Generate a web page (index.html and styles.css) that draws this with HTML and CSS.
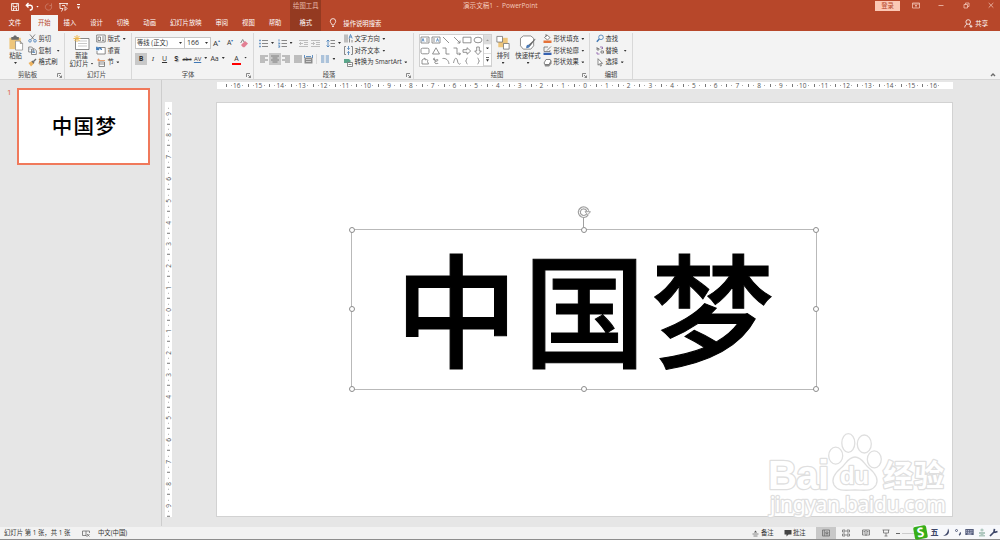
FILE: index.html
```html
<!DOCTYPE html>
<html>

<head>
    <meta charset="utf-8">
    <link rel="stylesheet" href="styles.css">
    <title>演示文稿1 - PowerPoint</title>
</head>

<body>
    <div class="header">
        <div class="titlebar">
            <div class="quick">
                <svg width="10" height="10" viewBox="0 0 10 10"><path d="M1.5 1.5h7v7h-7zM3 1.5v3h4v-3M3.5 8.500v-2.500h3v2.500" /></svg>
                <svg width="10" height="10" viewBox="0 0 10 10"><path class="bold" d="M3.500 1L1.300 3.300l2.200 2.200M1.500 3.300h4a2.400 2.400 0 0 1 0 4.700h-.7" /></svg>
                <i class="caret"></i>
                <svg class="faded" width="9" height="10" viewBox="0 0 10 10"><path d="M8 3.200A3.500 3.500 0 1 1 5 1.500M8.300 1v2.500H6" /></svg>
                <svg width="11" height="10" viewBox="0 0 11 10"><path d="M1 1.500h9M2 1.500v5h3M9 1.500v2M4 3.500h3M5 6.500l-1.500 3M7 4.500v4l2-2z" /></svg>
                <i class="caret barred"></i>
            </div>
            <div class="doc-name">演示文稿1&nbsp; -&nbsp; PowerPoint</div>
            <div class="login">登录</div>
            <div class="window">
                <svg width="8" height="7" viewBox="0 0 8 7"><path d="M.5 1h7v5h-7zM.5 2h7M4 5.500v-2M3 4l1-1 1 1" /></svg>
                <svg width="6" height="7" viewBox="0 0 6 7"><path d="M.5 3.500h5" /></svg>
                <svg width="7" height="7" viewBox="0 0 7 7"><path d="M1 2.500h3.500v3.500H1zM2.500 2.500V1H6v3.500H4.500" /></svg>
                <svg width="6" height="7" viewBox="0 0 6 7"><path d="M.7 1l4.600 4.600M5.300 1L.7 5.600" /></svg>
            </div>
        </div>
        <div class="tabs">
            <div class="tab file">文件</div>
            <div class="tab active">开始</div>
            <div class="tab">插入</div>
            <div class="tab">设计</div>
            <div class="tab">切换</div>
            <div class="tab">动画</div>
            <div class="tab">幻灯片放映</div>
            <div class="tab">审阅</div>
            <div class="tab">视图</div>
            <div class="tab">帮助</div>
            <div class="tab context"><span>绘图工具</span>格式</div>
            <div class="tell">
                <svg width="8" height="10" viewBox="0 0 8 10"><path d="M3 7C3 5.500 1.300 5 1.300 3.300a2.700 2.700 0 0 1 5.400 0C6.700 5 5 5.500 5 7zM3 8.500h2" /></svg>
                操作说明搜索
            </div>
            <div class="share">
                <svg width="9" height="9" viewBox="0 0 9 9"><circle cx="4.200" cy="3" r="2.300" /><path d="M.8 8.500c0-2 1.200-3 2.500-3.200M5 5.300l1.500 1M5.500 7.300h3M7 5.800v3" /></svg>
                共享
            </div>
        </div>
    </div>

    <div class="ribbon">
        <div class="group clipboard">
            <div class="body">
                <div class="big">
                    <svg width="16" height="17" viewBox="0 0 16 17"><path fill="#eec67c" d="M1 3h12v12H1z" /><path fill="#6a6a6a" d="M3 2h2l1-1.500h2L9 2h2v3H3z" /><path fill="#fff" stroke="#7c7c7c" stroke-width=".7" d="M7.500 6.500h5l2.500 2.500v7H7.500zM12.500 6.500V9H15" /></svg>
                    <span>粘贴</span>
                    <i class="caret"></i>
                </div>
                <div class="rows">
                    <div class="row"><svg width="9" height="9" viewBox="0 0 9 9"><path class="k" d="M2 .5l4 5M7 .5l-4 5" /><circle class="b" cx="2" cy="6.800" r="1.300" /><circle class="b" cx="7" cy="6.800" r="1.300" /></svg>剪切</div>
                    <div class="row"><svg width="9" height="9" viewBox="0 0 9 9"><path class="k w" d="M.7 1h3l1.500 1.500V6H.7zM3.500 3h3L8.300 4.500v4H3.500z" /><path class="b" d="M4.500 5h2.500M4.500 6.500h2.500M1.500 3h1" /></svg>复制<i class="caret far"></i></div>
                    <div class="row"><svg width="9" height="9" viewBox="0 0 9 9"><path fill="#eeb35f" d="M.5 5L4 3l2 2.500-3 3z" /><path class="k bold" d="M4 3l2 2.300M5.500 3.500L8 1" /></svg>格式刷</div>
                </div>
            </div>
            <div class="name">剪贴板</div>
            <svg class="launch" viewBox="0 0 5 5"><path class="k" d="M.5 4V.5H4M2 2l2.500 2.500M4.500 2.500v2h-2" /></svg>
        </div>

        <div class="group slides">
            <div class="body">
                <div class="big">
                    <svg width="17" height="16" viewBox="0 0 17 16"><path class="w k" d="M2.500 3.500H16v11H2.500z" /><path stroke="#bbb" d="M5 6h9M5 8.500h9M5 11h9" /><path stroke="#efb94f" stroke-width="1" d="M4 0v7M.5 3.500h7M1.500 1l5 5M6.500 1l-5 5" /></svg>
                    <span>新建</span>
                    <span>幻灯片<i class="caret"></i></span>
                </div>
                <div class="rows">
                    <div class="row"><svg width="10" height="9" viewBox="0 0 10 9"><path class="k w" d="M.7 1h8.500v7H.7z" /><path class="k" d="M2 3h2.500v3.500H2zM6 3h2M6 5h2M6 6.500h2" /></svg>版式<i class="caret"></i></div>
                    <div class="row"><svg width="10" height="9" viewBox="0 0 10 9"><path class="k w" d="M3 1.500h6.200v6.500H1V5" /><path class="b bold" d="M1 3.300C2 1.200 5 1 5.500 4M.8.8v2.700h2.500" /></svg>重置</div>
                    <div class="row"><svg width="10" height="9" viewBox="0 0 10 9"><path class="k w" d="M3 4h5.500v4.500H3zM3 6h5.500" /><path stroke="#e88b4e" d="M3 2.500h6M2.500.5v3M1 2h3" /></svg>节<i class="caret"></i></div>
                </div>
            </div>
            <div class="name">幻灯片</div>
        </div>

        <div class="group font">
            <div class="lines">
                <div class="line">
                    <div class="box family">等线 (正文)<i class="caret"></i></div>
                    <div class="box size">166<i class="caret"></i></div>
                    <span class="grow">A<sup>▴</sup></span>
                    <span class="grow small">A<sup>▾</sup></span>
                    <svg width="9" height="9" viewBox="0 0 9 9"><path fill="#e37f93" d="M1 6l4-4 3 2.500-3.500 3.700H3z" /><path class="k" d="M.7 4l2-3.500L4 3" /></svg>
                </div>
                <div class="line style">
                    <b class="on">B</b>
                    <em>I</em>
                    <u>U</u>
                    <b class="shadow">S</b>
                    <s>abc</s>
                    <span class="spacing">AV<i class="caret"></i></span>
                    <span>Aa<i class="caret"></i></span>
                    <span><span class="color">A</span><i class="caret"></i></span>
                </div>
            </div>
            <div class="name">字体</div>
            <svg class="launch" viewBox="0 0 5 5"><path class="k" d="M.5 4V.5H4M2 2l2.500 2.500M4.500 2.500v2h-2" /></svg>
        </div>

        <div class="group paragraph">
            <div class="body">
                <div class="lines">
                    <div class="line">
                        <svg width="9" height="9" viewBox="0 0 9 9"><path class="k" d="M3 1.500h6M3 4.500h6M3 7.500h6" /><path class="b bold" d="M.3 1.500h1.400M.3 4.500h1.400M.3 7.500h1.400" /></svg><i class="caret"></i>
                        <svg width="9" height="9" viewBox="0 0 9 9"><path class="k" d="M3.500 1.500H9M3.500 4.500H9M3.500 7.500H9" /><path class="b" d="M1 .3v2.200M.3 4h1.400v1H.3M.3 6.800h1.400v1.400H.3" /></svg><i class="caret"></i>
                        <i class="bar"></i>
                        <svg class="dim" width="9" height="9" viewBox="0 0 9 9"><path class="k" d="M0 1.500h9M5 3.500h4M5 5.500h4M0 7.500h9M4 4.500H.5M2 3L.5 4.500 2 6" /></svg>
                        <svg class="dim" width="9" height="9" viewBox="0 0 9 9"><path class="k" d="M0 1.500h9M5 3.500h4M5 5.500h4M0 7.500h9M0 4.500h3.500M2 3l1.500 1.500L2 6" /></svg>
                        <i class="bar"></i>
                        <svg width="9" height="9" viewBox="0 0 9 9"><path class="k" d="M4.500 1.500H9M4.500 4.500H9M4.500 7.500H9" /><path class="b" d="M2 1v7M.5 2.500L2 1l1.500 1.500M.5 6.500L2 8l1.500-1.500" /></svg><i class="caret"></i>
                    </div>
                    <div class="line align">
                        <span><svg width="8" height="8" viewBox="0 0 8 8"><path class="k" d="M0 1h8M0 3h5M0 5h8M0 7h5" /></svg></span>
                        <span class="on"><svg width="8" height="8" viewBox="0 0 8 8"><path class="k" d="M0 1h8M1.500 3h5M0 5h8M1.500 7h5" /></svg></span>
                        <span><svg width="8" height="8" viewBox="0 0 8 8"><path class="k" d="M0 1h8M3 3h5M0 5h8M3 7h5" /></svg></span>
                        <span><svg width="8" height="8" viewBox="0 0 8 8"><path class="k" d="M0 1h8M0 3h8M0 5h8M0 7h8" /></svg></span>
                        <span><svg width="9" height="9" viewBox="0 0 9 9"><path fill="#8c8c8c" d="M.5 2.500h8v6h-8z" /><path class="b" d="M.5 0v3M8.500 0v3M2 1.500h5" /><path stroke="#ddd" d="M2 4.500h5M2 6.500h5" /></svg></span>
                        <i class="bar"></i>
                        <svg width="8" height="8" viewBox="0 0 8 8"><path class="b" d="M0 1h3.300M4.700 1H8M0 3h3.300M4.700 3H8M0 5h3.300M4.700 5H8M0 7h3.300M4.700 7H8" /></svg><i class="caret"></i>
                    </div>
                </div>
                <div class="rows">
                    <div class="row"><svg width="9" height="9" viewBox="0 0 9 9"><path class="k" d="M1 .5v8M3 .5v8M5.500 4.500v4M8 6v2.500" /><path class="b" d="M5 4.500L6.500.5l1.700 4M5.500 3h2" /></svg>文字方向<i class="caret"></i></div>
                    <div class="row"><svg width="9" height="9" viewBox="0 0 9 9"><path class="k" d="M2 .5H.5v8H2M7 .5h1.500v8H7" /><path class="b" d="M4.500 0v3.500M3.300 2.300l1.200 1.200 1.200-1.200M4.500 9V5.500M3.300 6.700l1.200-1.200 1.200 1.200" /></svg>对齐文本<i class="caret"></i></div>
                    <div class="row"><svg width="9" height="9" viewBox="0 0 9 9"><path fill="#5ba58a" d="M0 1h5l2 2-2 2H0z" /><path class="k w" d="M3.500 4.500h5v4h-5zM4.500 6.500h3" /></svg>转换为 SmartArt<i class="caret"></i></div>
                </div>
            </div>
            <div class="name">段落</div>
            <svg class="launch" viewBox="0 0 5 5"><path class="k" d="M.5 4V.5H4M2 2l2.500 2.500M4.500 2.500v2h-2" /></svg>
        </div>

        <div class="group drawing">
            <div class="body">
                <div class="gallery">
                    <div class="shapes">
                        <svg viewBox="0 0 8 8"><path d="M0 1h8v6H0zM5 3h2M5 5h2" /><path class="b" d="M1 5.500l1-3 1 3" /></svg>
                        <svg viewBox="0 0 8 8"><path d="M0 1h8v6H0zM1 3h2M1 5h2" /><path class="b" d="M4.500 5.500l1-3 1 3" /></svg>
                        <svg viewBox="0 0 8 8"><path d="M1 1l6 6" /></svg>
                        <svg viewBox="0 0 8 8"><path d="M1 1l6 6M7 4.500V7H4.500" /></svg>
                        <svg viewBox="0 0 8 8"><path d="M0 1.200h8v5.600H0z" /></svg>
                        <svg viewBox="0 0 8 8"><ellipse cx="4" cy="4" rx="4" ry="2.800" /></svg>
                        <svg viewBox="0 0 8 8"><rect y="1.200" width="8" height="5.600" rx="1.500" /></svg>
                        <svg viewBox="0 0 8 8"><path d="M4 .8L7.500 7h-7z" /></svg>
                        <svg viewBox="0 0 8 8"><path d="M.5 1H4v6h3.500" /></svg>
                        <svg viewBox="0 0 8 8"><path d="M.5 1H4v6h3.500M6 5.500L7.500 7 6 8" /></svg>
                        <svg viewBox="0 0 8 8"><path d="M0 2.700h4V.7L7.700 4 4 7.300v-2H0z" /></svg>
                        <svg viewBox="0 0 8 8"><path d="M2.700 0v4h-2L4 7.700 7.300 4h-2V0z" /></svg>
                        <svg viewBox="0 0 8 8"><path d="M1 3l3-2v2c2-1 3.500 0 2.500 1.500L7.500 7H1z" /></svg>
                        <svg viewBox="0 0 8 8"><path d="M3 1c-3 1-1 3 1 2s3 0 1 1-3 0-2 2 3-1 3 1M1.500 1.500l2 2" /></svg>
                        <svg viewBox="0 0 8 8"><path d="M.5 1.500C4 1 6.500 3 7 7" /></svg>
                        <svg viewBox="0 0 8 8"><path d="M.5 6C2-1 4 1 4.500 4S6.500 8 7.500 6.500" /></svg>
                        <svg viewBox="0 0 8 8"><path d="M4.500 1C3 1 4 4 2.500 4 4 4 3 7 4.500 7" /></svg>
                        <svg viewBox="0 0 8 8"><path d="M3.500 1C5 1 4 4 5.500 4 4 4 5 7 3.500 7" /></svg>
                    </div>
                    <div class="scroll">
                        <span class="up"><i class="caret"></i></span>
                        <span><i class="caret"></i></span>
                        <span><i class="caret barred"></i></span>
                    </div>
                </div>
                <div class="big arrange">
                    <svg width="16" height="17" viewBox="0 0 16 17"><path fill="#eec67c" d="M3 3h10v10H3z" /><path class="w k" d="M1.500 1.500h6v6h-6zM8.500 9h6v6h-6z" /></svg>
                    <span>排列</span>
                    <i class="caret"></i>
                </div>
                <div class="big quick-style">
                    <svg width="18" height="17" viewBox="0 0 18 17"><path class="w k" d="M4 1h8l3 2.500v8L12 15H4l-3-3.500v-8z" /><path fill="#4b7ab5" d="M7 14c0-3 1-4 3.500-4l1 1.500c-1 2-2.500 2.500-4.500 2.500z" /><path fill="#686868" d="M10 10l6.500-6 .5.600-5.500 7z" /></svg>
                    <span>快速样式</span>
                    <i class="caret"></i>
                </div>
                <div class="rows">
                    <div class="row"><svg width="9" height="9" viewBox="0 0 9 9"><path class="k w" d="M1.500 3.500L4 1l3 2.500L4.500 6zM3 0v3" /><path fill="#e57238" d="M.5 6.500h8V9h-8z" /></svg>形状填充<i class="caret"></i></div>
                    <div class="row"><svg width="9" height="9" viewBox="0 0 9 9"><path class="k" d="M5 1H1v4.500h6V4M4 4.500L8 .5" /><path fill="#3561b0" d="M.5 6.700h8V9h-8z" /></svg>形状轮廓<i class="caret"></i></div>
                    <div class="row"><svg width="9" height="9" viewBox="0 0 9 9"><path fill="#8b8b8b" d="M1 5l6-4 1.500 2v2.500L6 8.500H2z" /><path class="k w" d="M3 1.500h4L8 3 6 6.500H2L1 5z" /></svg>形状效果<i class="caret"></i></div>
                </div>
            </div>
            <div class="name">绘图</div>
            <svg class="launch" viewBox="0 0 5 5"><path class="k" d="M.5 4V.5H4M2 2l2.500 2.500M4.500 2.500v2h-2" /></svg>
        </div>

        <div class="group editing">
            <div class="rows">
                <div class="row"><svg width="8" height="9" viewBox="0 0 8 9"><circle class="b" cx="5" cy="3.300" r="2.300" /><path class="b bold" d="M3.300 5L.8 7.800" /></svg>查找</div>
                <div class="row"><svg width="8" height="9" viewBox="0 0 8 9"><path class="k" d="M1 1v3h2V2.500H1M5 3.500l1.500-1.500M5 5h2.500v2H5z" /><path stroke="#8a5ba8" d="M1 6v2h2.500M4 1h2.500v2" /></svg>替换<i class="caret far"></i></div>
                <div class="row"><svg width="8" height="9" viewBox="0 0 8 9"><path class="k w" d="M2 .7v6.500l1.500-1.400 1 2.300 1-.5-1-2.200H6.500z" /></svg>选择<i class="caret"></i></div>
            </div>
            <div class="name">编辑</div>
        </div>
        <svg class="collapse" viewBox="0 0 6 4"><path class="k bold" d="M1 3l2-2 2 2" /></svg>
    </div>

    <div class="workspace">
        <div class="thumbs">
            <span class="number">1</span>
            <div class="thumb">中国梦</div>
        </div>
        <div class="editor">
            <div class="ruler across">
                <i>16</i><i>15</i><i>14</i><i>13</i><i>12</i><i>11</i><i>10</i><i>9</i><i>8</i><i>7</i><i>6</i><i>5</i><i>4</i><i>3</i><i>2</i><i>1</i><i>0</i><i>1</i><i>2</i><i>3</i><i>4</i><i>5</i><i>6</i><i>7</i><i>8</i><i>9</i><i>10</i><i>11</i><i>12</i><i>13</i><i>14</i><i>15</i><i>16</i>
            </div>
            <div class="stage">
                <div class="ruler down">
                    <i>9</i><i>8</i><i>7</i><i>6</i><i>5</i><i>4</i><i>3</i><i>2</i><i>1</i><i>0</i><i>1</i><i>2</i><i>3</i><i>4</i><i>5</i><i>6</i><i>7</i><i>8</i><i>9</i>
                </div>
                <div class="slide">
                    <div class="textbox">
                        中国梦
                        <i class="handle tl"></i>
                        <i class="handle tc"></i>
                        <i class="handle tr"></i>
                        <i class="handle ml"></i>
                        <i class="handle mr"></i>
                        <i class="handle bl"></i>
                        <i class="handle bc"></i>
                        <i class="handle br"></i>
                        <svg class="rotate" viewBox="0 0 14 21"><path d="M6.500 12v9" stroke-width="1" /><path d="M10.300 8.500A4.300 4.300 0 1 1 10.800 5" stroke-width="3.200" /><path class="inner" d="M10.300 8.500A4.300 4.300 0 1 1 10.800 5" /><path class="tip" d="M8 5.700h5.500l-2.700 3z" /></svg>
                    </div>
                    <!-- watermark in the corner of the slide -->
                    <svg class="watermark" viewBox="0 0 184 88">
                        <text class="latin" x="3" y="58" font-size="40" textLength="61">Bai</text>
                        <ellipse cx="70.700" cy="24.700" rx="7" ry="8.500" />
                        <ellipse cx="83.300" cy="12" rx="6.500" ry="9.300" />
                        <ellipse cx="99.300" cy="13" rx="7" ry="9" />
                        <ellipse cx="109.300" cy="28.300" rx="7" ry="8.500" />
                        <path d="M90 26c7 0 9 7 14 11 6 5 10 11 7 17-4 7-12 5-21 5s-17 2-21-5c-3-6 1-12 7-17 5-4 7-11 14-11z" />
                        <text class="latin" x="75" y="53" font-size="24" textLength="29">du</text>
                        <text class="cjk" x="118" y="55" font-size="30" textLength="61">经验</text>
                        <text class="url" x="5" y="81" font-size="21" textLength="176">jingyan.baidu.com</text>
                    </svg>
                </div>
            </div>
        </div>
    </div>

    <div class="status">
        <span class="pages">幻灯片 第 1 张，共 1 张</span>
        <svg width="8" height="7" viewBox="0 0 8 7"><path class="k" d="M4 1v5M4 1H.5v4.500H4l1 1M4 1h3.500v2M5 4l2.500 2.500M7.500 4L5 6.500" /></svg>
        <span class="lang">中文(中国)</span>
        <span class="notes"><svg width="7" height="7" viewBox="0 0 7 7"><path class="k" d="M.5 4h6M1.500 6h4" /><path fill="#555" d="M3.500.5L5 2.500H2z" /></svg>备注</span>
        <span class="comments"><svg width="8" height="8" viewBox="0 0 8 8"><path fill="#444" d="M.5 1h7v4.500h-3L2.500 7.500v-2h-2z" /></svg>批注</span>
        <span class="view on"><svg width="8" height="8" viewBox="0 0 8 8"><path class="k" d="M.5 1h7v6h-7zM2.300 1v6M3.800 3H6v1.500H3.800zM3.500 6h3" /></svg></span>
        <span class="view"><svg width="8" height="8" viewBox="0 0 8 8"><path class="k" d="M.5 1H3v2H.5zM5 1h2.500v2H5zM.5 5H3v2H.5zM5 5h2.500v2H5z" /></svg></span>
        <span class="view"><svg width="8" height="8" viewBox="0 0 8 8"><path class="k" d="M.5 1h7v5h-7zM4 1v6M1.500 2.500H3M1.500 4H3M5 2.500h1.500M5 4h1.500" /></svg></span>
        <span class="view"><svg width="8" height="8" viewBox="0 0 8 8"><path class="k" d="M.5 1h7M1.500 1v3h5V1M4 4v3M2.500 7h3" /></svg></span>
        <span class="zoom"></span>
        <div class="ime">
            <b class="logo">S</b>
            <b>五</b>
            <svg width="8" height="9" viewBox="0 0 8 9"><path fill="#3d4668" d="M6 .5C8.500 4 6 8.500 1 7.700 4 7 6 4.500 6 .5z" /></svg>
            <svg width="8" height="9" viewBox="0 0 8 9"><circle cx="2.500" cy="2.500" r="1" stroke="#3d4668" /><path stroke="#3d4668" stroke-width="1.400" d="M6 4.500c.7 1 0 2-1 2.500" /></svg>
            <svg width="9" height="8" viewBox="0 0 9 8"><path fill="#555e7c" d="M.3 1h8.400v6H.3z" /><path stroke="#eef" stroke-dasharray="1 .7" d="M1.300 2.700h6.500M1.300 4.300h6.500" /><path stroke="#eef" d="M2.500 6h4" /></svg>
            <svg width="8" height="9" viewBox="0 0 8 9"><circle cx="4" cy="2" r="1.600" fill="#b0c8c0" /><path fill="#b0c8c0" d="M1 4h6v2H5.500v1H7v1.500H1V7h1.500V6H1z" /></svg>
            <svg width="9" height="9" viewBox="0 0 9 9"><path stroke="#3d4668" stroke-width="1.700" d="M1 8l4-4M5.500.8L5 3.500l1 .8L8.500 3.500" /></svg>
        </div>
    </div>
</body>

</html>
```

FILE: styles.css
```css
* {
    box-sizing: border-box;
}

body {
    margin: 0;
    width: 1000px;
    height: 540px;
    overflow: hidden;
    display: flex;
    flex-direction: column;
    font-family: "Open Sans", "Noto Sans CJK SC", sans-serif;
    font-size: 6.35px;
    line-height: 10px;
    color: #333;
    white-space: nowrap;
}

i {
    font-style: normal;
}

svg {
    flex: none;
    fill: none;
    stroke-width: .8;
}

.k {
    stroke: #6c6c6c;
}

.b {
    stroke: #3f78b5;
}

.w {
    fill: #fff;
}

.bold {
    stroke-width: 1.4;
}

.caret {
    display: inline-block;
    flex: none;
    width: 3px;
    height: 2px;
    background: currentColor;
    clip-path: polygon(0 0, 100% 0, 50% 100%);
}

.barred {
    height: 5px;
    clip-path: polygon(0 0, 100% 0, 100% 18%, 0 18%, 0 50%, 100% 50%, 50% 100%, 0 50%);
}

/* title bar and tabs */
.header {
    height: 31px;
    background: #b7472a;
    color: #fff;
}

.header svg {
    stroke: #fff;
}

.titlebar {
    height: 15px;
    display: flex;
    align-items: flex-start;
}

.quick {
    width: 463px;
    height: 13px;
    padding-left: 10px;
    display: flex;
    align-items: center;
}

.quick svg:nth-child(2) {
    margin: 0 1px 0 5px;
}

.quick .faded {
    margin: 0 5px 0 5px;
    opacity: .35;
}

.quick .barred {
    margin-left: 8px;
}

.doc-name {
    width: 412px;
    padding-top: 1px;
    color: #f3cabd;
    font-size: 6.6px;
}

.login {
    width: 25px;
    height: 10px;
    margin-top: 1px;
    background: #fbc8b5;
    color: #b7472a;
    text-align: center;
}

.window {
    display: flex;
    padding: 2px 6px 0 12px;
    flex: 1;
    justify-content: space-between;
}

.header .window svg {
    stroke: #f3c4b5;
}

.tabs {
    height: 16px;
    padding-left: 1.500px;
    display: flex;
    line-height: 15px;
}

.tab {
    padding: 0 6.950px;
}

.file {
    margin-right: 3px;
}

.active {
    background: #f4f4f4;
    color: #b7472a;
    margin-right: -1px;
}

.context {
    position: relative;
    width: 31px;
    margin: -15px 0 0 2px;
    padding: 15px 0 0;
    background: #943a21;
    text-align: center;
}

.context span {
    position: absolute;
    top: 0;
    left: 0;
    width: 31px;
    line-height: 12px;
    color: #e9bbab;
}

.tell {
    display: flex;
    align-items: center;
    gap: 6px;
    margin-left: 8px;
}

.share {
    display: flex;
    align-items: center;
    gap: 2px;
    margin: 0 12px 0 auto;
}

/* ribbon */
.ribbon {
    position: relative;
    height: 49px;
    display: flex;
    background: #f3f3f3;
    border-bottom: 1px solid #d5d5d5;
}

.group {
    position: relative;
    height: 46px;
    margin-top: 2px;
    border-right: 1px solid #d8d8d8;
}

.body {
    display: flex;
}

.name {
    position: absolute;
    left: 0;
    right: 9px;
    bottom: 0;
    text-align: center;
    line-height: 9px;
    color: #444;
}

.launch {
    position: absolute;
    right: 2px;
    bottom: 1px;
    width: 5px;
    height: 5px;
}

.clipboard {
    width: 65px;
}

.slides {
    width: 67px;
}

.slides .name {
    right: 3px;
}

.font {
    width: 122px;
}

.paragraph {
    width: 160px;
}

.drawing {
    width: 176px;
}

.editing {
    width: 43px;
}

.editing .name {
    right: 0;
}

.collapse {
    position: absolute;
    right: 4px;
    bottom: 2px;
    width: 6px;
    height: 4px;
}

.big {
    display: flex;
    flex-direction: column;
    align-items: center;
    padding-top: 2px;
    line-height: 8px;
}

.big svg {
    height: 16px;
    margin-bottom: 1px;
}

.big > .caret {
    margin-top: 2px;
}

.big span .caret {
    margin: 0 0 1.500px 2px;
}

.clipboard .big {
    width: 28px;
    padding-left: 3px;
}

.slides .big {
    width: 31px;
    padding-left: 2px;
}

.row {
    display: flex;
    align-items: center;
    height: 11.800px;
    gap: 1.500px;
}

.row .caret {
    margin-left: 1px;
}

.row .far {
    margin-left: 4px;
}

.lines {
    padding-top: 4px;
}

.line {
    display: flex;
    align-items: center;
    height: 12px;
}

.line + .line {
    margin-top: 4px;
}

.font .line {
    padding-left: 3px;
}

.box {
    display: flex;
    align-items: center;
    justify-content: space-between;
    height: 12px;
    padding: 0 2px 0 1px;
    background: #fff;
    border: 1px solid #c6c6c6;
}

.family {
    width: 50px;
}

.size {
    width: 27px;
    margin-left: -1px;
    padding-left: 2px;
    font-size: 7px;
}

.grow {
    width: 14px;
    padding-left: 2px;
    font-size: 8px;
}

.small {
    width: 15px;
    font-size: 7px;
}

sup {
    font-size: 4px;
    line-height: 0;
    color: #3f78b5;
}

.style {
    font-size: 7px;
}

.style > * {
    width: 11.700px;
    text-align: center;
    flex: none;
}

.style .on {
    width: 12px;
}

.on {
    height: 12px;
    background: #c8c8c8;
    line-height: 12px;
}

.style em {
    font-family: "Liberation Serif", serif;
}

.shadow {
    text-shadow: 1px 1px 1px #999;
}

.style s {
    width: 10px;
    font-size: 5.500px;
}

.style > span {
    width: 17px;
}

.style > .spacing {
    width: 17px;
    font-size: 6px;
    text-decoration: underline #3f78b5;
}

.style > span:last-child {
    width: 18px;
    margin-left: 4.500px;
}

.style .caret {
    margin: 0 0 2px 3px;
}

.color {
    display: inline-block;
    width: 9px;
    height: 10px;
    line-height: 8px;
    border-bottom: 2px solid #f00;
}

.paragraph .lines {
    width: 90px;
    padding-left: 5px;
}

.paragraph .line .caret {
    margin: 0 3.500px 0 3px;
}

.paragraph .line .bar {
    width: 1px;
    height: 10px;
    margin: 0 3px 0 0;
    background: #dadada;
}

.dim {
    opacity: .5;
    margin-right: 3px;
}

.align > span {
    width: 11.300px;
    height: 12px;
    display: flex;
    align-items: center;
    justify-content: center;
}

.paragraph .line.align {
    margin-left: -1px;
}

.paragraph .align .bar {
    margin: 0 4px 0 2px;
}

.gallery {
    display: flex;
    width: 73px;
    height: 33px;
    margin: 1px 0 0 5px;
    border: 1px solid #d0d0d0;
    background: #fff;
}

.shapes {
    width: 63px;
    display: grid;
    grid-template-columns: repeat(6, 10.500px);
    grid-template-rows: repeat(3, 10.400px);
    place-items: center;
}

.shapes svg {
    width: 8px;
    height: 8px;
    stroke: #777;
    overflow: visible;
}

.shapes .b {
    stroke: #3f78b5;
}

.scroll {
    flex: 1;
    display: grid;
    border-left: 1px solid #d0d0d0;
}

.scroll span {
    display: flex;
    align-items: center;
    justify-content: center;
    border-bottom: 1px solid #ddd;
}

.scroll .up {
    background: #dcdcdc;
    color: #999;
    transform: scaleY(-1);
}

.arrange {
    width: 22px;
}

.quick-style {
    width: 28px;
}

.drawing .rows {
    margin-left: 1px;
}

.editing .rows {
    padding-left: 6px;
}

/* slide area */
.workspace {
    height: 447px;
    display: flex;
    background: #e6e6e6;
}

.thumbs {
    width: 162px;
    height: 446px;
    padding: 8px 0 0 7px;
    display: flex;
    border-right: 1px solid #cdcdcd;
}

.number {
    width: 10px;
    font-size: 8px;
    line-height: 8px;
    color: #e0603f;
}

.thumb {
    width: 133px;
    height: 77px;
    padding-left: 2px;
    border: 2px solid #f0795b;
    background: #fff;
    color: #000;
    font: 500 20.500px/71px "Noto Sans CJK SC", sans-serif;
    letter-spacing: 1.300px;
    text-align: center;
}

.ruler {
    display: flex;
    justify-content: center;
    background: #fff;
    color: #555;
    font-size: 6.500px;
}

.ruler i {
    flex: none;
    width: 21.780px;
    height: 7px;
    line-height: 7px;
    text-align: center;
    background:
        linear-gradient(#777, #777) 0 50% / 1px 3px no-repeat,
        linear-gradient(#aaa, #aaa) 5px 50% / 1px 1px no-repeat,
        linear-gradient(#aaa, #aaa) 16px 50% / 1px 1px no-repeat;
}

.across {
    width: 736px;
    height: 7px;
    margin: 2px 0 0 55px;
}

.stage {
    display: flex;
    margin-top: 13px;
}

.down {
    width: 7px;
    height: 415px;
    margin: 0 44px 0 3px;
    flex-direction: column;
}

.down i {
    width: 7px;
    height: 21.780px;
    line-height: 7px;
    writing-mode: vertical-rl;
    transform: rotate(180deg);
    background:
        linear-gradient(#777, #777) 50% 0 / 3px 1px no-repeat,
        linear-gradient(#aaa, #aaa) 50% 5px / 1px 1px no-repeat,
        linear-gradient(#aaa, #aaa) 50% 16px / 1px 1px no-repeat;
}

.slide {
    position: relative;
    width: 737px;
    height: 415px;
    border: 1px solid #d2d2d2;
    background: #fff;
}

.textbox {
    position: absolute;
    left: 134px;
    top: 126px;
    width: 466px;
    height: 161px;
    padding-left: 43px;
    border: 1px solid #b9b9b9;
    color: #000;
    font: 500 123px/148px "Noto Sans CJK SC", sans-serif;
    letter-spacing: 5px;
    -webkit-text-stroke: 1px #000;
}

.handle {
    position: absolute;
    width: 6px;
    height: 6px;
    margin: -3.500px;
    border: 1px solid #8c8c8c;
    border-radius: 50%;
    background: #fff;
}

.tl, .tc, .tr {
    top: 0;
}

.ml, .mr {
    top: 50%;
}

.bl, .bc, .br {
    top: 100%;
}

.tl, .ml, .bl {
    left: 0;
}

.tc, .bc {
    left: 50%;
}

.tr, .mr, .br {
    left: 100%;
}

.rotate {
    position: absolute;
    left: 225px;
    top: -24px;
    width: 14px;
    height: 21px;
    stroke: #a0a0a0;
}

.rotate .inner {
    stroke: #fff;
    stroke-width: 1;
}

.rotate .tip {
    fill: #fff;
    stroke-width: 1;
}

.watermark {
    position: absolute;
    left: 548px;
    top: 328px;
    width: 184px;
    height: 88px;
    fill: #fff;
    stroke: #dfdfdf;
    stroke-width: 1.300;
}

.watermark text {
    paint-order: stroke;
    stroke-width: 2.600;
    stroke-linejoin: round;
}

.latin {
    font-family: "Liberation Sans", sans-serif;
    font-weight: 700;
}

.cjk {
    font-family: "Noto Sans CJK SC", sans-serif;
    font-weight: 700;
}

.url {
    font-family: "Noto Sans", sans-serif;
}

/* status bar */
.status {
    position: relative;
    height: 13px;
    padding-left: 4px;
    display: flex;
    align-items: center;
    background: #f2f2f2;
    border-bottom: 1px solid #8d8d8d;
}

.pages {
    width: 78px;
}

.lang {
    margin-left: 8px;
    width: 654px;
}

.notes,
.comments {
    display: flex;
    align-items: center;
    width: 32px;
    gap: 2px;
}

.comments {
    gap: 1px;
}

.view {
    width: 20px;
    height: 12px;
    display: flex;
    align-items: center;
    justify-content: center;
}

.zoom {
    width: 18px;
    height: 1px;
    background: linear-gradient(90deg, #666 4px, transparent 4px, transparent 6px, #ccc 6px);
}

.ime {
    position: absolute;
    right: 0;
    top: -2px;
    width: 86px;
    height: 14px;
    padding-right: 2px;
    display: flex;
    align-items: center;
    justify-content: space-between;
    background: #f7f8fb;
    color: #3d4668;
    font-size: 8px;
}

.logo {
    width: 13px;
    height: 13px;
    border-radius: 2px;
    background: #38ae18;
    color: #fff;
    font-size: 13px;
    line-height: 13px;
    text-align: center;
    transform: rotate(-10deg);
}
```
